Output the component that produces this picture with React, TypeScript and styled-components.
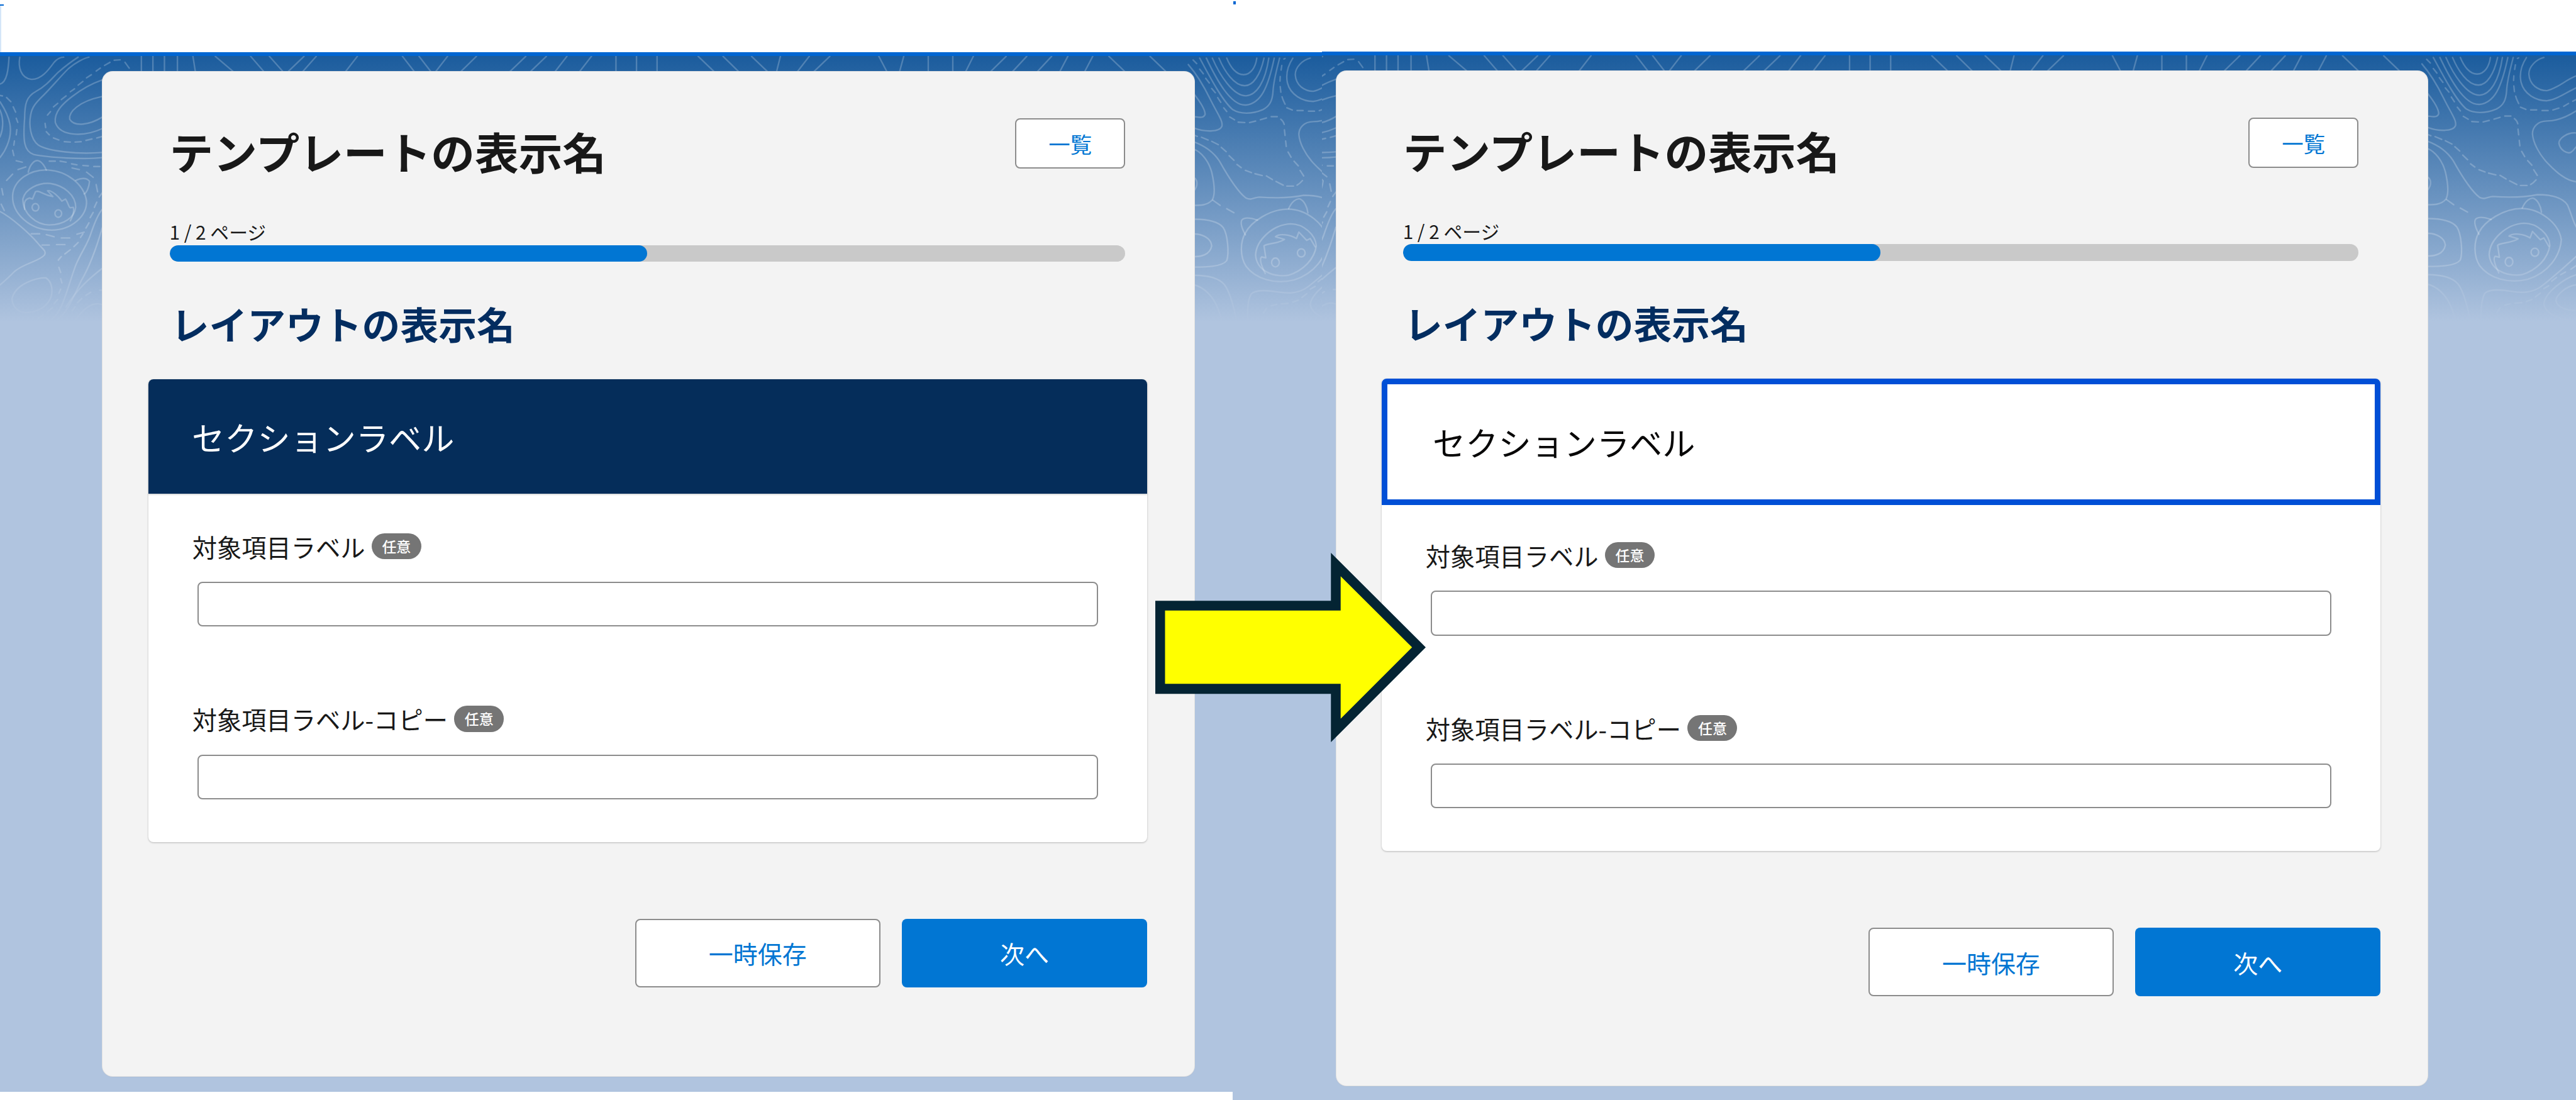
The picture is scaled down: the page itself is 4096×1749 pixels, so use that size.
import React from "react";
import styled, { createGlobalStyle } from "styled-components";

const SCALE = 4096 / 7143;
const px = (n: number) => `${(n * SCALE).toFixed(2)}px`;

const Global = createGlobalStyle`
  html, body { margin: 0; padding: 0; width: 4096px; height: 1749px; overflow: hidden; background: #fff; }
  * { box-sizing: border-box; }
  body { font-family: "Noto Sans CJK JP", "Noto Sans", sans-serif; color: #181818; }
`;

const Page = styled.main`
  position: relative;
  display: flex;
  width: 4096px;
  height: 1749px;
  overflow: hidden;
  background: #fff;
`;

const Panel = styled.section<{ $width: number; $headerHeight: number }>`
  position: relative;
  flex: none;
  display: flex;
  flex-direction: column;
  width: ${(p) => px(p.$width)};
  height: 100%;
  & > header {
    flex: none;
    height: ${(p) => px(p.$headerHeight)};
    background: #fff;
    border-bottom: ${px(12)} solid #0066d2;
    box-sizing: content-box;
  }
`;

const Canvas = styled.div`
  position: relative;
  flex: 1;
  min-height: 0;
  padding-top: ${px(44)};
  background: linear-gradient(180deg, #1b5c9d 0, #b0c4df ${px(738)}, #b0c4df 100%);
`;

const Contours = styled.svg`
  position: absolute;
  inset: 0;
  width: 100%;
  height: 100%;
  fill: none;
  stroke: rgba(255, 255, 255, 0.22);
  stroke-width: 2.4px;
  stroke-linecap: round;
  stroke-linejoin: round;
  -webkit-mask-image: linear-gradient(180deg, #000 ${px(560)}, transparent ${px(745)});
  mask-image: linear-gradient(180deg, #000 ${px(560)}, transparent ${px(745)});
  & * { vector-effect: non-scaling-stroke; }
`;

const Card = styled.article<{ $left: number }>`
  position: relative;
  display: flex;
  flex-direction: column;
  width: ${px(3026)};
  margin-left: ${(p) => px(p.$left)};
  padding-bottom: ${px(247)};
  background: #f3f3f3;
  border-radius: ${px(28)};
  box-shadow: 0 0 0 1px #e2e2e2, 0 1px 2px rgba(0, 0, 0, 0.08);
`;

const Intro = styled.div`
  display: flex;
  flex-direction: column;
  padding: ${px(129)} ${px(191)} 0 ${px(185)};
`;

const TitleRow = styled.div`
  display: flex;
  justify-content: space-between;
  align-items: flex-start;
  height: ${px(139)};
`;

const Title = styled.h1`
  margin: ${px(29)} 0 0;
  font-size: ${px(121.5)};
  line-height: ${px(121.5)};
  font-weight: 700;
  color: #181818;
  white-space: nowrap;
`;

const ListButton = styled.button`
  width: ${px(305)};
  height: ${px(139)};
  padding: 0;
  background: #fff;
  border: 2px solid #8c8c8c;
  border-radius: ${px(14)};
  color: #0176d3;
  font-family: inherit;
  font-size: ${px(60)};
`;

const PageLabel = styled.div`
  margin-top: ${px(149)};
  height: ${px(54)};
  line-height: ${px(54)};
  font-size: ${px(52)};
  white-space: nowrap;
  color: #181818;
`;

const Track = styled.div`
  margin-top: ${px(9)};
  height: ${px(46)};
  border-radius: ${px(23)};
  background: #c9c9c9;
  overflow: hidden;
`;

const Fill = styled.div<{ $percent: number }>`
  width: ${(p) => p.$percent}%;
  height: 100%;
  border-radius: ${px(23)};
  background: #0176d3;
`;

const LayoutName = styled.h2`
  margin: ${px(116)} 0 0 ${px(4)};
  font-size: ${px(106)};
  line-height: ${px(110)};
  font-weight: 700;
  color: #032d60;
  white-space: nowrap;
`;

const Section = styled.div`
  margin: ${px(100)} ${px(130)} 0 ${px(127)};
  background: #fff;
  border-radius: ${px(14)};
  box-shadow: 0 1px 3px rgba(0, 0, 0, 0.25);
`;

const SectionHeader = styled.div<{ $selected?: boolean }>`
  display: flex;
  align-items: center;
  font-size: ${px(91)};
  white-space: nowrap;
  border-radius: ${px(14)} ${px(14)} 0 0;
  ${(p) =>
    p.$selected
      ? `
    height: ${px(351)};
    padding-left: ${px(125)};
    background: #fff;
    color: #080707;
    border-style: solid;
    border-color: #004fd6;
    border-width: ${px(17)} ${px(16)};
  `
      : `
    height: ${px(317)};
    padding-left: ${px(120)};
    background: #052d5a;
    color: #fff;
    box-shadow: 0 2px 2px rgba(0, 0, 0, 0.14);
  `}
`;

const SectionBody = styled.div<{ $top: number }>`
  display: flex;
  flex-direction: column;
  gap: ${px(220)};
  padding: ${(p) => px(p.$top)} ${px(137)} ${px(119)} ${px(121)};
`;

const Field = styled.label`
  display: flex;
  flex-direction: column;
  gap: ${px(63)};
`;

const FieldLabel = styled.div`
  display: flex;
  align-items: center;
  gap: ${px(18)};
  height: ${px(72)};
  font-size: ${px(68.5)};
  line-height: ${px(72)};
  white-space: nowrap;
  color: #181818;
`;

const Badge = styled.span`
  display: inline-flex;
  align-items: center;
  justify-content: center;
  width: ${px(138)};
  height: ${px(72)};
  border-radius: ${px(36)};
  background: #757575;
  color: #fff;
  font-size: ${px(40)};
  font-weight: 500;
`;

const TextInput = styled.input`
  display: block;
  width: calc(100% - ${px(15)});
  height: ${px(124)};
  margin-left: ${px(15)};
  background: #fff;
  border: 2px solid #8c8c8c;
  border-radius: ${px(14)};
`;

const Footer = styled.div`
  display: flex;
  justify-content: flex-end;
  gap: ${px(60)};
  margin: ${px(212)} ${px(130)} 0 0;
`;

const ActionButton = styled.button<{ $primary?: boolean }>`
  width: ${px(680)};
  height: ${px(190)};
  padding: 0;
  border-radius: ${px(14)};
  font-family: inherit;
  font-size: ${px(68)};
  background: ${(p) => (p.$primary ? "#0176d3" : "#fff")};
  color: ${(p) => (p.$primary ? "#fff" : "#0176d3")};
  border: ${(p) => (p.$primary ? "none" : "2px solid #8c8c8c")};
`;

const BottomStrip = styled.div`
  position: absolute;
  left: 0;
  bottom: 0;
  width: ${px(3418)};
  height: ${px(23)};
  background: #fff;
`;

const Tick = styled.i<{ $x: number; $y: number; $w: number; $h: number; $faint?: boolean }>`
  position: absolute;
  left: ${(p) => px(p.$x)};
  top: ${(p) => px(p.$y)};
  width: ${(p) => px(p.$w)};
  height: ${(p) => px(p.$h)};
  background: ${(p) => (p.$faint ? "#d5e6f8" : "#0066d2")};
`;

const ArrowGraphic = styled.svg`
  position: absolute;
  left: ${px(3203)};
  top: ${px(1533)};
  width: ${px(750)};
  height: ${px(525)};
`;

/* Top band strokes, x positions measured on a crop (crop x / 0.439). */
const bandStrokes: [number, number][] = [
  [172, 172], [186, 186], [200, 200], [216, 216], [235, 238], [262, 285], [305, 322], [328, 345],
  [370, 350], [385, 368], [435, 420], [490, 505], [510, 525], [545, 530], [580, 560], [640, 620],
  [665, 645], [690, 675], [720, 705], [750, 750], [775, 775], [800, 800], [850, 870], [880, 900],
  [915, 935], [950, 945], [985, 970], [1010, 990], [1070, 1080], [1100, 1095], [1130, 1130],
  [1160, 1160], [1185, 1175], [1225, 1205], [1250, 1232], [1280, 1262], [1300, 1290], [1330, 1320],
  [1350, 1370], [1400, 1420],
];

const Topography = ({ viewBox }: { viewBox: string }) => (
  <Contours viewBox={viewBox} preserveAspectRatio="none" aria-hidden="true">
    <g>
      {bandStrokes.map(([a, b]) => (
        <path key={a} d={`M${(a / 0.439).toFixed(0)} 158 L${(b / 0.439).toFixed(0)} 202`} />
      ))}
    </g>
    {/* left margin */}
    <g transform="translate(0 100) scale(0.3333 0.574)">
      <path d="M165 105C150 150 170 205 260 212C340 215 400 170 450 130C480 110 510 105 530 105" />
      <path d="M75 105C70 160 60 225 0 235" />
      <path d="M850 590C700 600 400 590 280 575C200 560 190 510 205 400C205 330 220 295 300 270C380 245 430 210 480 180C560 140 610 120 650 105" />
      <path d="M850 565C650 575 400 560 320 530C250 500 240 430 255 385C265 345 300 325 360 290C430 250 500 200 570 160C630 130 700 110 740 105" />
      <path d="M850 215C800 225 700 250 600 295C520 330 450 370 460 420C500 490 700 490 850 450" />
      <path d="M850 295C650 320 570 370 580 405C620 445 750 430 850 395" />
      <path d="M950 120L1000 118M870 145L915 130M800 172L835 158M720 205L760 190M650 240L690 222M585 272L620 258M510 310L550 292M445 345L480 328M395 385L420 368M375 425L380 445M385 465L410 480M445 495L490 505M535 513L585 515M625 515L675 513M715 507L765 500M805 495L850 488M1040 130L1075 158" />
      <path d="M0 290L20 292M55 300L90 320M110 345L130 370M135 400L148 420M140 455L135 480M120 510L115 530M105 555L115 580M135 605L185 612M410 607L460 607M500 607L550 612M595 620L640 625M600 640L660 648M690 628L735 630M780 633L830 633M150 648L215 635M55 700L105 670M15 740L25 770M10 815L35 845" />
      <path d="M0 360C30 400 30 450 0 490M0 320C90 400 110 460 60 530C40 560 20 575 0 590" />
      <path d="M105 775C110 700 250 645 400 650C560 655 700 720 720 800C725 870 600 940 430 940C250 940 100 860 105 775Z" />
      <path d="M235 660C250 620 290 600 320 605C350 610 375 635 385 650" />
      <path d="M630 700C670 690 720 685 745 705C740 735 720 760 700 765" />
      <path d="M190 790C210 740 320 710 420 715C530 725 630 770 630 830C620 880 530 915 410 915C300 915 190 860 190 790Z" />
      <path d="M205 840C195 800 215 790 245 785L270 790L295 755C330 745 350 770 440 778L395 750C430 745 490 780 515 800L545 790C570 810 570 830 585 832L610 830C620 850 600 880 585 895" />
      <ellipse cx="295" cy="830" rx="28" ry="18" />
      <ellipse cx="485" cy="860" rx="28" ry="18" />
      <path d="M720 660L775 685M800 720L812 755M825 780L850 760M785 830L805 805M750 880L775 855M715 930L740 905M640 960L700 950M670 975L690 958M615 1020L650 1000M540 1055L585 1035M485 1085L510 1068M490 1120L505 1145M505 1175L515 1195M490 1245L505 1225M450 1295L480 1275M395 1335L435 1315M320 1365L360 1350M830 1230L850 1230M715 1255L755 1240M645 1290L680 1270M600 1330L625 1310" />
      <path d="M260 958L330 958M385 962L450 972M510 978L580 978M350 1012L410 1012M470 1010L540 1010" />
      <path d="M0 850C100 880 250 960 310 1000C350 1030 390 1040 370 1060C330 1090 200 1100 120 1140C70 1170 30 1190 0 1205" />
      <path d="M100 1270C130 1200 300 1170 380 1170C440 1190 440 1240 420 1270C370 1330 250 1345 180 1335C130 1325 100 1300 100 1270Z" />
      <path d="M430 1370C520 1340 570 1200 630 1110C680 1040 730 1010 760 950C790 900 820 860 850 840" />
      <path d="M480 1370C560 1340 620 1250 680 1180C760 1100 810 1010 850 930" />
      <path d="M620 1380C680 1330 760 1280 850 1300" />
      <path d="M550 1310C650 1220 750 1170 850 1125" />
    </g>
    {/* right margin, repeated at the panel's right-hand side */}
    <g transform="translate(3295 142.5) scale(0.3333 0.5102)">
      <path d="M0 75C60 120 120 180 180 260C240 340 290 380 280 410C260 445 130 440 48 420" />
      <path d="M48 235C90 270 140 320 140 345C130 370 80 360 48 358" />
      <path d="M40 50L70 70M95 100L125 125M145 150L175 175M195 205L225 228M245 255L270 280M295 310L320 330M345 360L385 375M415 388L470 390M510 390L560 382M600 375L650 365M690 358L740 358M770 372C785 380 795 390 798 400M800 430L805 460M810 490L815 520M830 550L855 578M880 600L915 625M930 650L960 680M950 705C930 720 920 725 905 730M820 735L875 735M730 710L790 730M650 680L700 700M555 668L615 678M475 650L525 662M405 618L440 635M340 570L380 595M275 525L315 548M195 492L250 510M110 470L165 485M48 458L75 465" />
      <path d="M320 40C350 90 400 130 460 130C520 130 560 90 570 40" />
      <path d="M255 40C300 110 380 190 470 190C540 190 600 130 630 40" />
      <path d="M200 40C260 130 370 245 480 245C570 240 640 170 670 40" />
      <path d="M150 40C230 150 350 300 480 295C600 285 660 210 715 40" />
      <path d="M95 40C170 130 280 270 370 320C430 345 530 345 620 320C680 300 700 270 705 220C710 160 740 90 760 40" />
      <path d="M805 42L795 45M778 80L772 105M765 140L763 165M765 195L770 225M780 250C785 265 795 275 805 290M820 310L865 322M905 325L955 325M1000 328L1050 328M1090 325L1140 315M1180 305L1220 290M1255 278L1284 268" />
      <path d="M870 40C830 80 810 130 825 175C850 240 950 275 1040 275C1120 270 1200 230 1284 205" />
      <path d="M1015 40C950 50 890 90 890 130C895 190 970 220 1040 220C1110 215 1200 160 1284 140" />
      <path d="M1284 330C1200 365 1120 385 1040 385C960 385 920 420 920 455C925 500 970 560 1040 610C1120 665 1200 710 1284 715" />
      <path d="M1284 450C1210 445 1140 480 1140 505C1150 545 1210 565 1240 555C1265 545 1275 530 1284 525" />
      <path d="M48 495C110 510 200 540 260 600C320 670 400 760 480 800C530 815 550 795 590 795C700 800 850 800 960 785C1080 785 1170 800 1210 840C1240 880 1255 930 1284 960" />
      <path d="M48 535C110 550 170 600 195 660C220 730 225 780 200 810C160 840 100 840 48 840" />
      <path d="M48 690C75 700 85 730 48 760" />
      <path d="M205 812L265 840M320 858L380 880" />
      <path d="M48 915C130 915 240 920 290 960C330 1000 340 1100 320 1140C280 1175 130 1175 48 1175" />
      <path d="M48 995C120 995 190 1020 195 1060C180 1110 100 1120 48 1118" />
      <path d="M48 1220C130 1220 240 1225 300 1270C350 1310 390 1420 405 1480" />
      <path d="M48 1272C130 1285 200 1330 240 1390C260 1420 275 1460 285 1480" />
      <path d="M475 990C520 930 680 860 830 860C980 860 1140 940 1160 1030C1150 1120 1050 1210 880 1245C720 1270 560 1240 480 1170C430 1120 430 1040 475 990Z" />
      <path d="M475 1000C450 970 430 940 445 920C470 900 530 910 575 920" />
      <path d="M835 858C860 820 900 800 930 805C965 815 990 850 995 880" />
      <path d="M560 1110C565 1030 700 945 850 940C960 940 1060 1000 1065 1060C1050 1130 960 1195 830 1220C700 1230 570 1195 560 1110Z" />
      <path d="M640 1210C610 1170 590 1130 610 1120L645 1125L630 1060C660 1045 740 1050 800 1025L725 1010C760 990 850 1000 900 1020L920 985L985 1030L1015 1020L1055 1065" />
      <ellipse cx="725" cy="1150" rx="32" ry="24" />
      <ellipse cx="940" cy="1098" rx="32" ry="22" />
      <path d="M1284 1120C1200 1170 1100 1230 1000 1280C920 1320 830 1320 740 1310C650 1300 560 1300 525 1320C495 1350 490 1420 495 1480" />
      <path d="M1240 1190L1284 1170M1155 1220L1195 1205M1080 1255L1120 1235M1015 1295L1055 1280M945 1340L985 1320M870 1365L915 1355M775 1375L830 1372M690 1385L735 1378M625 1425L650 1400" />
      <path d="M1284 1220C1180 1240 1020 1320 1015 1380C1030 1440 1180 1470 1284 1470" />
      <path d="M1284 1275C1200 1280 1120 1330 1115 1360C1125 1400 1210 1415 1284 1415" />
    </g>
  </Contours>
);

const Form = ({ selected, left, bodyTop }: { selected?: boolean; left: number; bodyTop: number }) => (
  <Card $left={left}>
    <Intro>
      <TitleRow>
        <Title>テンプレートの表示名</Title>
        <ListButton>一覧</ListButton>
      </TitleRow>
      <PageLabel>1 / 2 ページ</PageLabel>
      <Track>
        <Fill $percent={50} />
      </Track>
      <LayoutName>レイアウトの表示名</LayoutName>
    </Intro>
    <Section>
      <SectionHeader $selected={selected}>セクションラベル</SectionHeader>
      <SectionBody $top={bodyTop}>
        <Field>
          <FieldLabel>
            対象項目ラベル<Badge>任意</Badge>
          </FieldLabel>
          <TextInput type="text" />
        </Field>
        <Field>
          <FieldLabel>
            対象項目ラベル-コピー<Badge>任意</Badge>
          </FieldLabel>
          <TextInput type="text" />
        </Field>
      </SectionBody>
    </Section>
    <Footer>
      <ActionButton>一時保存</ActionButton>
      <ActionButton $primary>次へ</ActionButton>
    </Footer>
  </Card>
);

export default function App() {
  return (
    <Page>
      <Global />
      <Panel $width={3665} $headerHeight={145}>
        <header />
        <Canvas>
          <Topography viewBox="0 157 3665 2893" />
          <Form left={285} bodyTop={110} />
        </Canvas>
        <BottomStrip />
        <Tick $x={0} $y={12} $w={10} $h={4} />
        <Tick $x={0} $y={16} $w={3} $h={129} $faint />
        <Tick $x={3419} $y={3} $w={8} $h={9} />
      </Panel>
      <Panel $width={3478} $headerHeight={143}>
        <header />
        <Canvas>
          <Topography viewBox="245 157 3478 2895" />
          <Form selected left={40} bodyTop={103} />
        </Canvas>
      </Panel>
      <ArrowGraphic viewBox="3203 1533 750 525" aria-hidden="true">
        <polygon
          fill="#042433"
          points="3203,1666 3690,1666 3690,1533 3953,1795 3690,2058 3690,1924 3203,1924"
        />
        <polygon
          fill="#ffff00"
          points="3230,1693 3717,1693 3717,1598 3915,1795 3717,1993 3717,1896 3230,1896"
        />
      </ArrowGraphic>
    </Page>
  );
}
